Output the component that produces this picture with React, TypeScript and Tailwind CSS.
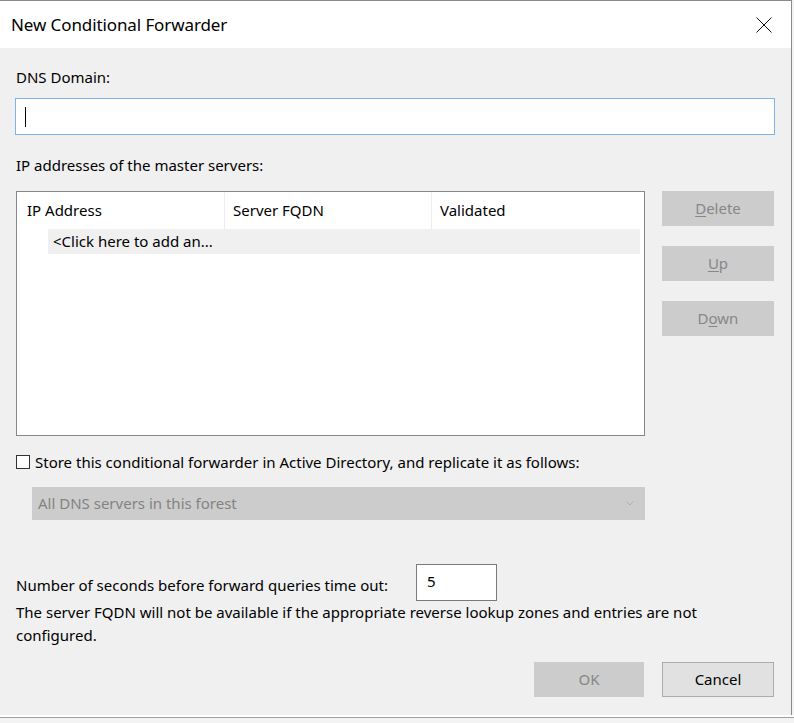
import React from 'react';

const font = { fontFamily: '"Noto Sans", "Open Sans", sans-serif' };

const SideButton: React.FC<{ pre?: string; u: string; post: string }> = ({ pre = '', u, post }) => (
  <button className="w-[112px] h-[35px] bg-[#cccccc] text-[#878787] text-[15px] flex items-center justify-center">
    <span>
      {pre}
      <u className="underline-offset-2">{u}</u>
      {post}
    </span>
  </button>
);

export default function App() {
  return (
    <div className="w-[794px] h-[723px] bg-[#f3f3f3] overflow-hidden" style={font}>
      <div className="w-[792px] h-[715px] border-t border-r border-[#8a8a8a] flex flex-col">
        {/* Title bar */}
        <div className="h-[47px] bg-white flex items-center justify-between pl-[11px] pr-[19px] shrink-0">
          <span className="text-[17px] text-black tracking-[-0.1px]">New Conditional Forwarder</span>
          <svg width="16" height="16" viewBox="0 0 16 16">
            <path d="M0.5 0.5L15.5 15.5M15.5 0.5L0.5 15.5" stroke="#111" strokeWidth="1" />
          </svg>
        </div>

        {/* Body */}
        <div className="flex-1 bg-[#f0f0f0] pl-[16px] pr-[17px] text-[15px] text-black flex flex-col">
          <div className="mt-[19px] leading-[20px]">DNS Domain:</div>
          <div className="mt-[11px] -ml-[1px] w-[760px] h-[37px] bg-white border border-[#7eb4ea] flex items-center pl-[9px]">
            <div className="w-px h-[20px] bg-black" />
          </div>

          <div className="mt-[20px] leading-[20px]">IP addresses of the master servers:</div>

          <div className="mt-[16px] flex gap-[17px]">
            <div className="w-[629px] h-[245px] shrink-0 bg-white border border-[#828790] pr-[4px]">
              <div className="h-[37px] grid grid-cols-[208px_207px_1fr] items-center">
                <div className="pl-[10px] h-full flex items-center border-r border-[#ececec]">IP Address</div>
                <div className="pl-[8px] h-full flex items-center border-r border-[#ececec]">Server FQDN</div>
                <div className="pl-[8px] h-full flex items-center">Validated</div>
              </div>
              <div className="ml-[31px] h-[25px] bg-[#f0f0f0] flex items-center pl-[5px]">&lt;Click here to add an...</div>
            </div>

            <div className="flex flex-col gap-[20px] w-[112px] shrink-0">
              <SideButton u="D" post="elete" />
              <SideButton u="U" post="p" />
              <SideButton pre="D" u="o" post="wn" />
            </div>
          </div>

          <div className="mt-[16px] flex items-center gap-[5px] leading-[20px]">
            <div className="w-[14px] h-[14px] bg-white border border-[#333]" />
            <span>Store this conditional forwarder in Active Directory, and replicate it as follows:</span>
          </div>

          <div className="mt-[15px] ml-[16px] w-[613px] h-[33px] bg-[#cccccc] flex items-center justify-between pl-[6px] pr-[11px] text-[#838383]">
            <span>All DNS servers in this forest</span>
            <svg width="8" height="5" viewBox="0 0 8 5">
              <path d="M0.5 0.5L4 4L7.5 0.5" stroke="#b0b0b0" fill="none" strokeWidth="1" />
            </svg>
          </div>

          <div className="mt-[44px] flex items-center">
            <span className="w-[400px] leading-[20px] pt-[4px]">Number of seconds before forward queries time out:</span>
            <div className="w-[81px] h-[37px] bg-white border border-[#7a7a7a] pl-[10px] pt-[6px] leading-[20px]">5</div>
          </div>

          <div className="leading-[23px] pr-[20px]">
            The server FQDN will not be available if the appropriate reverse lookup zones and entries are not configured.
          </div>

          <div className="mt-[15px] flex justify-end gap-[18px]">
            <button className="w-[110px] h-[35px] bg-[#cccccc] text-[#878787] text-[15px]">OK</button>
            <button className="w-[112px] h-[35px] bg-[#e1e1e1] border border-[#adadad] text-black text-[15px]">Cancel</button>
          </div>
        </div>
      </div>
      <div className="h-[2px] bg-white" />
      <div className="h-px bg-[#a0a0a0]" />
    </div>
  );
}
